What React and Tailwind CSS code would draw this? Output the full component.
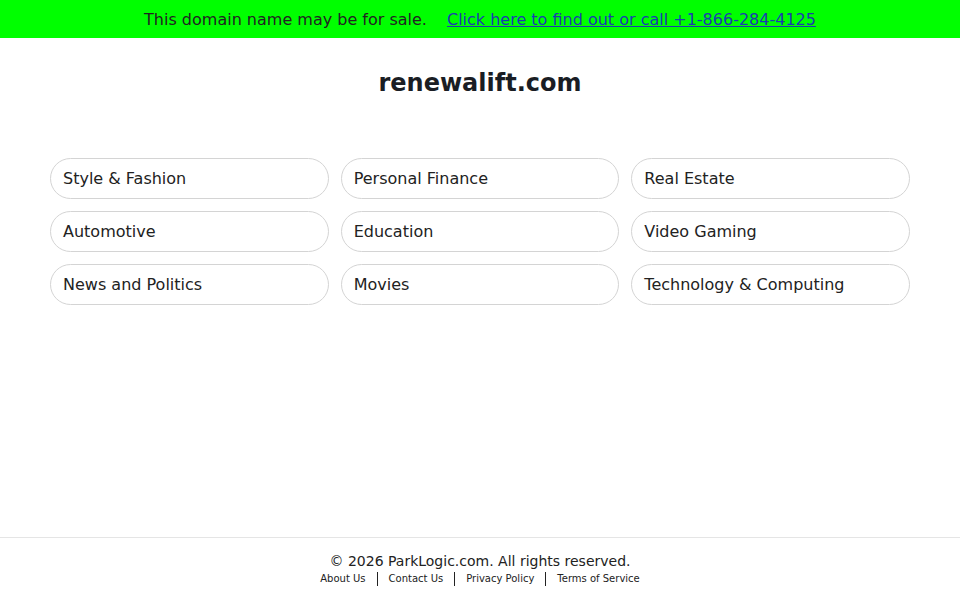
const categories = [
  'Style & Fashion',
  'Personal Finance',
  'Real Estate',
  'Automotive',
  'Education',
  'Video Gaming',
  'News and Politics',
  'Movies',
  'Technology & Computing',
];

const footerLinks = ['About Us', 'Contact Us', 'Privacy Policy', 'Terms of Service'];

export default function App() {
  return (
    <div className="min-h-screen flex flex-col bg-white text-[#222] font-['DejaVu_Sans',sans-serif]">
      <div className="h-[38px] pt-[2px] bg-[#00ff00] flex items-center justify-center gap-[20px] text-[16px] text-[#222]">
        <span>This domain name may be for sale.</span>
        <a href="#" className="text-[#1a3cb0] underline">
          Click here to find out or call +1-866-284-4125
        </a>
      </div>

      <main className="flex-1">
        <h1 className="text-center text-[24px] font-bold text-[#1a1d24] mt-[30px] leading-[30px]">
          renewalift.com
        </h1>

        <div className="mx-[50px] mt-[60px] grid grid-cols-3 gap-x-[12px] gap-y-[12px]">
          {categories.map((c) => (
            <a
              key={c}
              href="#"
              className="h-[41px] flex items-center px-[12px] rounded-full border border-[#d4d4d4] text-[16px] text-[#222]"
            >
              {c}
            </a>
          ))}
        </div>
      </main>

      <footer className="border-t border-[#e5e5e5] h-[63px] pt-[15px] text-center">
        <p className="text-[14px] leading-[17px] text-[#222]">© 2026 ParkLogic.com. All rights reserved.</p>
        <div className="mt-[2px] flex justify-center items-center text-[10px] leading-[14px] text-[#222]">
          {footerLinks.map((l, i) => (
            <span key={l} className="flex items-center">
              {i > 0 && <span className="w-px h-[14px] bg-[#222] mx-[11px]" />}
              <a href="#">{l}</a>
            </span>
          ))}
        </div>
      </footer>
    </div>
  );
}
